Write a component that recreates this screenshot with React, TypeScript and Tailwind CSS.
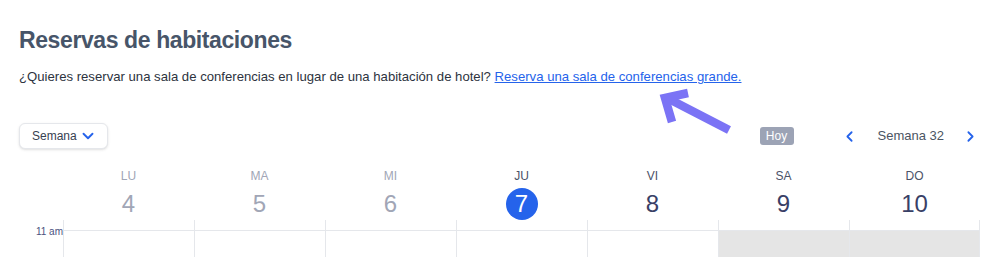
import { ChevronDown, ChevronLeft, ChevronRight } from 'lucide-react';

const DAYS = [
  { label: 'LU', num: 4, past: true },
  { label: 'MA', num: 5, past: true },
  { label: 'MI', num: 6, past: true },
  { label: 'JU', num: 7, today: true },
  { label: 'VI', num: 8 },
  { label: 'SA', num: 9, weekend: true },
  { label: 'DO', num: 10, weekend: true },
];

export default function App() {
  return (
    <div className="relative w-[984px] h-[268px] overflow-hidden bg-white font-['Liberation_Sans',Arial,sans-serif]">
      <div className="px-[19px] pt-6">
        <h1 className="text-[23px] leading-8 font-bold tracking-[-0.4px] text-[#475569]">Reservas de habitaciones</h1>
        <p className="mt-[11px] text-[13.15px] leading-5 text-[#2d3340]">
          ¿Quieres reservar una sala de conferencias en lugar de una habitación de hotel?{' '}
          <a href="#" className="text-[#2563eb] underline">Reserva una sala de conferencias grande.</a>
        </p>
      </div>

      {/* barra de herramientas */}
      <div className="mt-9 flex items-center justify-between pl-[19px] pr-[5px]">
        <button
          type="button"
          className="flex h-[26px] w-[89px] items-center justify-between rounded-md border border-gray-200 bg-white pl-3 pr-[10px] text-xs text-[#374151] shadow-sm"
        >
          Semana
          <ChevronDown className="h-[18px] w-[18px] text-[#2563eb]" strokeWidth={2.5} />
        </button>
        <div className="flex items-center">
          <span className="flex h-[18px] w-[34px] items-center justify-center rounded-[3px] bg-[#9ca3b5] text-xs text-white">Hoy</span>
          <ChevronLeft className="ml-[47px] h-[17px] w-[17px] text-[#2563eb]" strokeWidth={2.5} />
          <span className="ml-5 text-[13px] text-[#4b5563]">Semana 32</span>
          <ChevronRight className="ml-[18px] h-[17px] w-[17px] text-[#2563eb]" strokeWidth={2.5} />
        </div>
      </div>

      {/* calendario */}
      <div className="mt-[19px] flex">
        <div className="w-[63px] shrink-0" />
        <div className="grid w-[917px] grid-cols-7">
          {DAYS.map(d => (
            <div key={d.label} className="flex flex-col items-center">
              <span className={`text-xs leading-4 ${d.past ? 'text-[#a1a6b6]' : 'text-[#4b5268]'}`}>{d.label}</span>
              {d.today ? (
                <span className="mt-1 flex h-8 w-8 items-center justify-center rounded-full bg-[#2563eb] text-2xl leading-8 text-white">{d.num}</span>
              ) : (
                <span className={`mt-1 text-2xl leading-8 ${d.past ? 'text-[#a1a6b6]' : 'text-[#394066]'}`}>{d.num}</span>
              )}
            </div>
          ))}
        </div>
      </div>

      <div className="flex">
        <div className="w-[63px] shrink-0 pt-[6px] text-right text-[10px] leading-[11px] text-[#4b5280]">11 am</div>
        <div className="grid w-[917px] grid-cols-7">
          {DAYS.map((d, i) => (
            <div key={d.label} className={`flex flex-col border-l border-[#e5e7eb] ${i === 6 ? 'border-r' : ''}`}>
              <div className="h-[11px] border-b border-[#e5e7eb]" />
              <div className={`h-[26px] ${d.weekend ? 'bg-[#e5e5e5]' : ''}`} />
            </div>
          ))}
        </div>
      </div>

      {/* flecha */}
      <svg className="absolute left-[655px] top-[85px]" width="90" height="55" viewBox="0 0 90 55">
        <line x1="74" y1="45" x2="14" y2="14" stroke="#7b73f5" strokeWidth="8.5" />
        <polyline points="33,8 10,13 17,37" fill="none" stroke="#7b73f5" strokeWidth="8.5" strokeLinejoin="miter" />
      </svg>
    </div>
  );
}
